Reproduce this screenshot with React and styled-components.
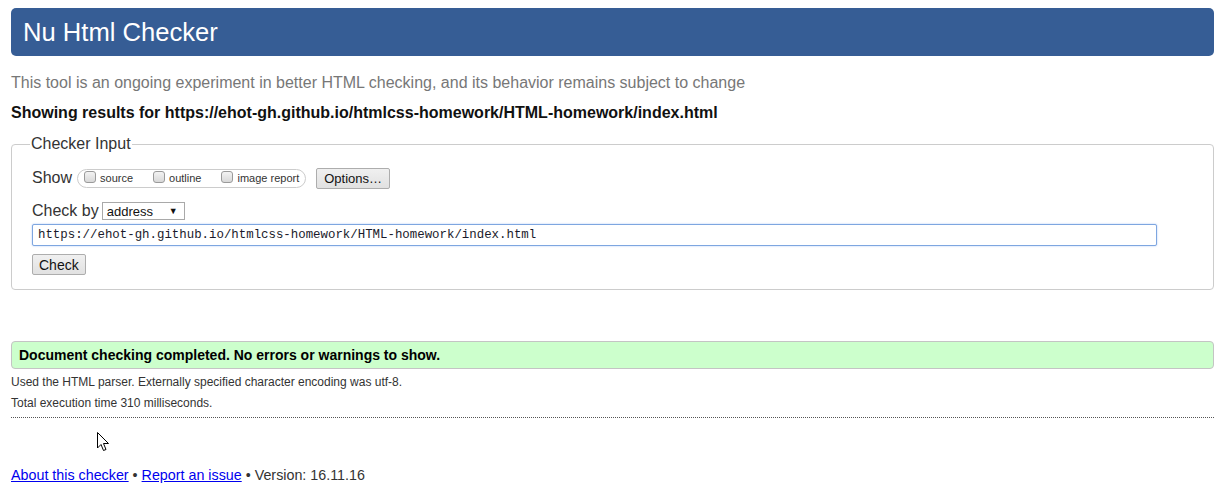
import React from "react";
import styled, { createGlobalStyle } from "styled-components";

const GlobalStyle = createGlobalStyle`
  html, body {
    margin: 0;
    padding: 0;
    background: #fff;
  }
  body {
    font-family: "Liberation Sans", Arial, sans-serif;
    color: #222;
  }
`;

const Page = styled.div`
  position: relative;
  padding: 8px 11px 20px;
`;

const Header = styled.h1`
  margin: 0;
  height: 48px;
  line-height: 48px;
  padding-left: 12px;
  background: #365d95;
  border-radius: 5px;
  color: #fff;
  font-size: 25.6px;
  font-weight: normal;
`;

const Intro = styled.p`
  margin: 17px 0 0;
  font-size: 16px;
  line-height: 20px;
  color: #777;
`;

const Results = styled.p`
  margin: 10px 0 0;
  font-size: 16px;
  line-height: 20px;
  font-weight: bold;
  color: #111;
`;

const Fieldset = styled.fieldset`
  margin: 11px 0 0;
  padding: 13px 20px 14px 20px;
  border: 1px solid #ccc;
  border-radius: 4px;
  min-width: 0;
`;

const Legend = styled.legend`
  margin-left: -2px;
  padding: 0 1px;
  font-size: 16px;
  line-height: 20px;
  color: #333;
`;

const Row = styled.div`
  display: flex;
  align-items: center;
  height: ${(p) => p.$h || 22}px;
  margin-top: ${(p) => p.$top || 0}px;
`;

const RowLabel = styled.span`
  font-size: 16px;
  color: #333;
  margin-right: ${(p) => p.$gap || 4}px;
`;

const Pill = styled.div`
  display: flex;
  align-items: center;
  height: 17px;
  padding: 0 6px 0 6px;
  border: 1px solid #ccc;
  border-radius: 10px;
`;

const Option = styled.label`
  display: flex;
  align-items: center;
  font-size: 11px;
  color: #333;
  margin-right: ${(p) => (p.$last ? 0 : 20)}px;
`;

const Box = styled.input.attrs({ type: "checkbox" })`
  appearance: none;
  width: 12px;
  height: 12px;
  margin: 0 4px 3px 0;
  border: 1px solid #9a9a9a;
  border-radius: 3px;
  background: linear-gradient(#f3f3f3, #d8d8d8);
  box-sizing: border-box;
`;

const Button = styled.button`
  height: ${(p) => p.$h || 21}px;
  padding: 0 ${(p) => p.$px || 6}px;
  margin-left: ${(p) => p.$ml || 0}px;
  border: 1px solid #adadad;
  border-radius: 2px;
  background: linear-gradient(#f0f0f0, #e1e1e1);
  font-family: "Liberation Sans", Arial, sans-serif;
  font-size: ${(p) => p.$fs || 13}px;
  color: #111;
`;

const Select = styled.div`
  display: flex;
  align-items: center;
  justify-content: space-between;
  box-sizing: border-box;
  width: 83px;
  height: 18px;
  padding: 0 6px 0 4px;
  border: 1px solid #a9a9a9;
  font-size: 13px;
  color: #111;
`;

const Arrow = styled.span`
  font-size: 9px;
  color: #111;
`;

const UrlInput = styled.input`
  display: block;
  box-sizing: border-box;
  width: 1125px;
  height: 22px;
  margin-top: 2px;
  padding: 0 5px;
  border: 1px solid #7ea6e0;
  border-radius: 2px;
  box-shadow: 0 0 2px #a8c6f5;
  outline: none;
  font-family: "Liberation Mono", "DejaVu Sans Mono", monospace;
  font-size: 12.4px;
  color: #1a1a2a;
`;

const Success = styled.div`
  margin-top: 51px;
  height: 26px;
  line-height: 26px;
  padding: 0 7px;
  background: #ccffcc;
  border: 1px solid #c4c4c4;
  border-radius: 4px;
  font-size: 14px;
  font-weight: bold;
  color: #000;
`;

const Details = styled.p`
  margin: ${(p) => (p.$first ? 3 : 0)}px 0 0;
  font-size: 12px;
  line-height: 21px;
  color: #333;
`;

const Divider = styled.hr`
  margin: 3px 0 0;
  border: 0;
  border-top: 1px dotted #555;
`;

const Footer = styled.p`
  margin: 47px 0 0;
  font-size: 14.3px;
  line-height: 20px;
  color: #333;

  a {
    color: #0000ee;
    text-decoration: underline;
  }
`;

const Cursor = styled.svg`
  position: absolute;
  left: 97px;
  top: 432px;
`;

const url = "https://ehot-gh.github.io/htmlcss-homework/HTML-homework/index.html";

export default function App() {
  return (
    <Page>
      <GlobalStyle />
      <Header>Nu Html Checker</Header>
      <Intro>
        This tool is an ongoing experiment in better HTML checking, and its
        behavior remains subject to change
      </Intro>
      <Results>Showing results for {url}</Results>

      <Fieldset>
        <Legend>Checker Input</Legend>
        <Row>
          <RowLabel $gap={5}>Show</RowLabel>
          <Pill>
            <Option>
              <Box />
              source
            </Option>
            <Option>
              <Box />
              outline
            </Option>
            <Option $last>
              <Box />
              image report
            </Option>
          </Pill>
          <Button $ml={10} $px={7}>Options…</Button>
        </Row>
        <Row $top={11}>
          <RowLabel $gap={3}>Check by</RowLabel>
          <Select>
            address
            <Arrow>▼</Arrow>
          </Select>
        </Row>
        <UrlInput defaultValue={url} />
        <Row $top={8} $h={21}>
          <Button $fs={14} $px={6}>Check</Button>
        </Row>
      </Fieldset>

      <Success>Document checking completed. No errors or warnings to show.</Success>
      <Details $first>
        Used the HTML parser. Externally specified character encoding was utf-8.
      </Details>
      <Details>Total execution time 310 milliseconds.</Details>
      <Divider />

      <Footer>
        <a href="#about">About this checker</a> • <a href="#report">Report an issue</a> •
        Version: 16.11.16
      </Footer>

      <Cursor width="13" height="20" viewBox="0 0 13 20">
        <path
          d="M0.5 0.5 L0.5 16 L4 12.5 L6.5 18.5 L9 17.5 L6.5 11.5 L11.5 11.5 Z"
          fill="#fff"
          stroke="#000"
          strokeWidth="1"
          strokeLinejoin="miter"
        />
      </Cursor>
    </Page>
  );
}
